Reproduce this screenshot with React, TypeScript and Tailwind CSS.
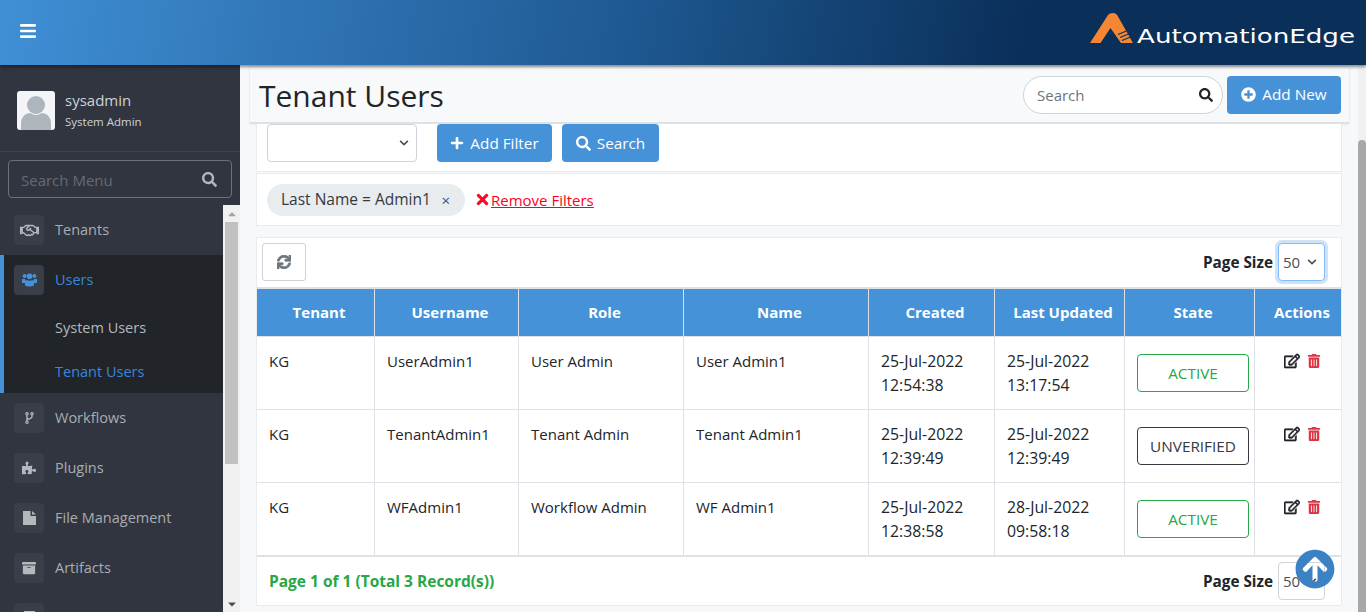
import React from "react";
import { FaBars, FaSearch, FaRegHandshake, FaPuzzlePiece, FaArchive, FaPlus, FaPlusCircle, FaTimes, FaSync, FaRegEdit, FaTrashAlt, FaArrowCircleUp, FaCaretUp, FaCaretDown, FaChevronDown } from "react-icons/fa";

const Logo = () => (
  <div className="flex items-end -mt-[8px]">
    <svg width="44" height="31" viewBox="0 0 44 31" className="block">
      <path d="M0 30 L18 2 Q19.5 0 23 0 Q26.5 0 28 3.5 L43 30 H31 L20.5 15 L10.5 30 Z" fill="#f58634" />
      <path d="M28 21.5 L36.5 18 M30 24.5 L38.5 21 M32 27.5 L40 24.2" stroke="#0a2f59" strokeWidth="1.2" />
    </svg>
    <svg width="222" height="28" viewBox="0 0 222 28" className="block ml-[1px] overflow-visible">
      <text x="2" y="27" textLength="218" lengthAdjust="spacingAndGlyphs" fill="#ffffff" fontFamily="'DejaVu Sans', sans-serif" fontSize="20" fontWeight="400">AutomationEdge</text>
    </svg>
  </div>
);

const UsersIcon = () => (
  <svg width="15" height="14" viewBox="0 0 15 14" fill="#4592d8">
    <circle cx="2.6" cy="3" r="2" />
    <circle cx="12.4" cy="3" r="2" />
    <circle cx="7.5" cy="3.2" r="2.8" />
    <path d="M0 6 H3 V10 H0 Z M12 6 H15 V10 H12 Z" />
    <path d="M3.6 7 Q7.5 8.6 11.4 7 Q12 7.4 12 9 V12.6 Q7.5 14.6 3 12.6 V9 Q3 7.4 3.6 7 Z" />
  </svg>
);

const ForkIcon = () => (
  <svg width="9" height="12" viewBox="0 0 9 12" fill="none" stroke="#b4b8bc">
    <circle cx="2" cy="1.8" r="1.2" strokeWidth="1.2" />
    <circle cx="7" cy="1.8" r="1.2" strokeWidth="1.2" />
    <circle cx="2" cy="10.2" r="1.2" strokeWidth="1.2" />
    <path d="M2 3 V9 M7 3 V4.5 Q7 6.5 2 7.5" strokeWidth="1.4" />
  </svg>
);

const FileIcon = () => (
  <svg width="13" height="14" viewBox="0 0 13 14" fill="#b4b8bc">
    <path d="M0 0 H7.5 V5 H13 V14 H0 Z M9 0 L13 3.6 H9 Z" />
  </svg>
);

const MenuIcon = ({ children }: { children?: React.ReactNode }) => (
  <div className="w-[30px] h-[30px] rounded-[4px] bg-[#3a3e49] flex items-center justify-center shrink-0">{children}</div>
);

const MenuItem = ({ icon, label }: { icon?: React.ReactNode; label?: string }) => (
  <div className="h-[50px] flex items-center pl-[14px] shrink-0">
    <MenuIcon>{icon}</MenuIcon>
    {label && <span className="ml-[11px] text-[14.5px] text-[#a8adb3]">{label}</span>}
  </div>
);

const Sidebar = () => (
  <aside className="w-[240px] shrink-0 bg-[#31353f] flex flex-col h-full">
    <div className="h-[87px] border-b border-[#3f434d] flex items-center pl-[17px] pt-[5px] shrink-0">
      <div className="w-[38px] h-[39px] rounded-[3px] bg-[#f4f5f6] flex items-end justify-center overflow-hidden">
        <svg width="32" height="35" viewBox="0 0 32 35">
          <circle cx="16" cy="10" r="9" fill="#adb5bd" />
          <path d="M1 35 V29 Q1 19 10 18 Q16 22 22 18 Q31 19 31 29 V35 Z" fill="#adb5bd" />
        </svg>
      </div>
      <div className="ml-[10px] mt-[1px] flex flex-col">
        <span className="text-[15px] leading-[20px] text-[#ccd3da]">sysadmin</span>
        <span className="text-[11.5px] leading-[23px] text-[#ccd3da]">System Admin</span>
      </div>
    </div>
    <div className="px-[8px] pt-[8px] pb-[7px] shrink-0">
      <div className="h-[38px] rounded-[4px] border border-[#6c7078] flex items-center justify-between pl-[12px] pr-[14px]">
        <span className="text-[15px] text-[#666b73] pt-[2px]">Search Menu</span>
        <FaSearch className="text-[#b4b8bc] text-[15px]" />
      </div>
    </div>
    <div className="flex-1 flex min-h-0">
      <nav className="w-[223px] flex flex-col overflow-hidden">
        <MenuItem icon={<FaRegHandshake className="text-[#b4b8bc] text-[19px]" />} label="Tenants" />
        <div className="bg-[#212428] border-l-4 border-[#4592d8] shrink-0 h-[138px]">
          <div className="h-[50px] flex items-center pl-[10px]">
            <MenuIcon><UsersIcon /></MenuIcon>
            <span className="ml-[11px] text-[14.5px] text-[#3b86dc]">Users</span>
          </div>
          <div className="pl-[51px] h-[44px] flex items-center pt-[2px] text-[14.5px] text-[#b5b9bd]">System Users</div>
          <div className="pl-[51px] h-[44px] flex items-center pt-[2px] text-[14.5px] text-[#3b86dc]">Tenant Users</div>
        </div>
        <MenuItem icon={<ForkIcon />} label="Workflows" />
        <MenuItem icon={<FaPuzzlePiece className="text-[#b4b8bc] text-[14px]" />} label="Plugins" />
        <MenuItem icon={<FileIcon />} label="File Management" />
        <MenuItem icon={<FaArchive className="text-[#b4b8bc] text-[14px]" />} label="Artifacts" />
        <MenuItem icon={<div className="w-[11px] h-[14px] bg-[#b4b8bc]" />} />
      </nav>
      <div className="w-[17px] bg-[#f1f1f1] flex flex-col items-center">
        <div className="h-[17px] flex items-center justify-center"><FaCaretUp className="text-[#a3a3a3] text-[12px]" /></div>
        <div className="w-[13px] h-[242px] bg-[#c1c1c1]" />
        <div className="flex-1" />
        <div className="h-[17px] flex items-center justify-center"><FaCaretDown className="text-[#505050] text-[12px]" /></div>
      </div>
    </div>
  </aside>
);

const Btn = ({ icon, label, w }: { icon: React.ReactNode; label: string; w: string }) => (
  <div className={`h-[38px] rounded-[4px] bg-[#4592d8] text-white flex items-center justify-center gap-[6px] text-[15.3px] ${w}`}>
    {icon}<span>{label}</span>
  </div>
);

const cols = ["w-[118px]", "w-[144px]", "w-[165px]", "w-[185px]", "w-[126px]", "w-[130px]", "w-[130px]", "w-[87px]"];
const heads = ["Tenant", "Username", "Role", "Name", "Created", "Last Updated", "State", "Actions"];
const rows = [
  ["KG", "UserAdmin1", "User Admin", "User Admin1", "25-Jul-2022", "12:54:38", "25-Jul-2022", "13:17:54", "ACTIVE"],
  ["KG", "TenantAdmin1", "Tenant Admin", "Tenant Admin1", "25-Jul-2022", "12:39:49", "25-Jul-2022", "12:39:49", "UNVERIFIED"],
  ["KG", "WFAdmin1", "Workflow Admin", "WF Admin1", "25-Jul-2022", "12:38:58", "28-Jul-2022", "09:58:18", "ACTIVE"],
];

const Cell = ({ w, children, date }: { w: string; children: React.ReactNode; date?: boolean }) => (
  <div className={`${w} shrink-0 border-r border-[#dee2e6] pl-[12px] pt-[12px] leading-[24px] text-[#212529] ${date ? "text-[15.8px]" : "text-[15px]"}`}>{children}</div>
);

const Table = () => (
  <div className="flex flex-col border-b-2 border-[#dee2e6]">
    <div className="flex h-[50px] bg-[#4592d8] border-t-2 border-b border-[#dee2e6]">
      {heads.map((h, i) => (
        <div key={h} className={`${cols[i]} shrink-0 flex items-center justify-center pl-[7px] text-[15px] font-bold text-white ${i < 7 ? "border-r border-[#dee2e6]" : ""}`}>{h}</div>
      ))}
    </div>
    {rows.map((r, idx) => (
      <div key={idx} className={`flex ${idx < 2 ? "h-[73px] border-b border-[#dee2e6]" : "h-[72px]"}`}>
        <Cell w={cols[0]}>{r[0]}</Cell>
        <Cell w={cols[1]}>{r[1]}</Cell>
        <Cell w={cols[2]}>{r[2]}</Cell>
        <Cell w={cols[3]}>{r[3]}</Cell>
        <Cell w={cols[4]} date>{r[4]}<br />{r[5]}</Cell>
        <Cell w={cols[5]} date>{r[6]}<br />{r[7]}</Cell>
        <div className={`${cols[6]} shrink-0 border-r border-[#dee2e6] pl-[12px] pt-[17px]`}>
          <div className={`w-[112px] h-[38px] rounded-[4px] border flex items-center justify-center text-[15.3px] ${r[8] === "ACTIVE" ? "border-[#28a745] text-[#28a745]" : "border-[#343a40] text-[#343a40]"}`}>{r[8]}</div>
        </div>
        <div className={`${cols[7]} shrink-0 flex items-start pl-[29px] pt-[16px] gap-[7px]`}>
          <FaRegEdit className="text-[#212529] text-[16px] [stroke-width:20px]" />
          <FaTrashAlt className="text-[#dc3545] text-[14px] mt-[1px]" />
        </div>
      </div>
    ))}
  </div>
);

const PageSize = ({ focus }: { focus?: boolean }) => (
  <div className="flex items-center gap-[5px]">
    <span className="text-[15.3px] font-bold text-[#212529]">Page Size</span>
    <div className={`w-[47px] h-[38px] rounded-[4px] border bg-white flex items-center justify-between pl-[4px] pr-[7px] text-[#495057] text-[15px] ${focus ? "border-[#80bdff] ring-[3px] ring-[#cfe2f6]" : "border-[#ced4da]"}`}>
      <span>50</span><FaChevronDown className="text-[#495057] text-[10px]" />
    </div>
  </div>
);

const Main = () => (
  <main className="flex-1 min-w-0 bg-[#f7f8fb] flex flex-col relative pl-[10px] pr-[9px] pt-[2px] h-full overflow-hidden">
    <div className="h-[57px] bg-[#f8f9fa] border-b-2 border-[#dee2e6] shadow-[0_0_2px_rgba(0,0,0,0.12)] flex items-center justify-between pl-[9px] pr-[8px] shrink-0">
      <h1 className="text-[30px] font-medium text-[#212529] leading-[1] pt-[2px]">Tenant Users</h1>
      <div className="flex items-center gap-[4px]">
        <div className="w-[200px] h-[38px] rounded-[19px] border border-[#ced4da] bg-white flex items-center justify-between pl-[13px] pr-[9px]">
          <span className="text-[15px] text-[#6c757d] pt-[1px]">Search</span>
          <FaSearch className="text-[#212529] text-[14px]" />
        </div>
        <Btn icon={<FaPlusCircle className="text-[15px]" />} label="Add New" w="w-[114px]" />
      </div>
    </div>
    <div className="ml-[6px] mr-[7px] flex flex-col">
      <div className="h-[48px] bg-white border border-t-0 border-[#e9ecef] flex items-start pl-[10px] shrink-0">
        <div className="w-[150px] h-[38px] rounded-[4px] border border-[#ced4da] bg-white flex items-center justify-end pr-[7px]">
          <FaChevronDown className="text-[#495057] text-[10px]" />
        </div>
        <div className="ml-[20px]"><Btn icon={<FaPlus className="text-[14px]" />} label="Add Filter" w="w-[115px]" /></div>
        <div className="ml-[10px]"><Btn icon={<FaSearch className="text-[15px]" />} label="Search" w="w-[97px]" /></div>
      </div>
      <div className="h-[53px] mt-[1px] bg-white border border-[#e9ecef] flex items-center pl-[10px] shrink-0">
        <div className="h-[32px] w-[198px] rounded-[16px] bg-[#e9ecef] flex items-center justify-between pl-[14px] pr-[15px] text-[15.5px] text-[#343a40]">
          <span className="pt-[1px]">Last Name = Admin1</span>
          <span className="text-[#33508f] text-[15px] pt-[1px]">×</span>
        </div>
        <FaTimes className="ml-[9px] text-[#fb0a2a] text-[17px]" />
        <span className="pt-[1px] text-[15px] text-[#ff0022] underline">Remove Filters</span>
      </div>
      <div className="mt-[11px] bg-white border border-[#e9ecef] flex flex-col shrink-0">
        <div className="h-[49px] flex items-start justify-between pt-[5px] pl-[5px] pr-[16px]">
          <div className="w-[44px] h-[38px] rounded-[3px] border border-[#ced4da] flex items-center justify-center">
            <FaSync className="text-[#6c757d] text-[14px] [stroke-width:30px]" />
          </div>
          <PageSize focus />
        </div>
        <Table />
        <div className="h-[48px] flex items-center justify-between pl-[12px] pr-[16px]">
          <span className="text-[15.5px] font-bold text-[#28a745] pt-[1px]">Page 1 of 1 (Total 3 Record(s))</span>
          <PageSize />
        </div>
      </div>
    </div>
    <FaArrowCircleUp className="absolute left-[1055px] top-[484px] text-[40px] text-[#3a82c4]" />
  </main>
);

const PageScroll = () => (
  <div className="w-[8px] shrink-0 bg-[#f1f1f1] flex flex-col h-full">
    <div className="h-[75px]" />
    <div className="flex-1 bg-[#a8a8a8] rounded-t-[4px]" />
  </div>
);

export default function App() {
  return (
    <div className="w-[1366px] h-[612px] overflow-hidden flex flex-col font-['Open_Sans',sans-serif]">
      <header className="h-[65px] shrink-0 bg-[linear-gradient(100deg,#408fd6_0%,#1f5a93_45%,#0a2f59_75%,#0a2f59_100%)] flex items-center justify-between pl-[19px] pr-[9px] relative z-10 shadow-[0_2px_3px_rgba(0,0,0,0.45)]">
        <FaBars className="text-white text-[18px] -mt-[4px]" />
        <Logo />
      </header>
      <div className="flex-1 flex min-h-0">
        <Sidebar />
        <Main />
        <PageScroll />
      </div>
    </div>
  );
}
